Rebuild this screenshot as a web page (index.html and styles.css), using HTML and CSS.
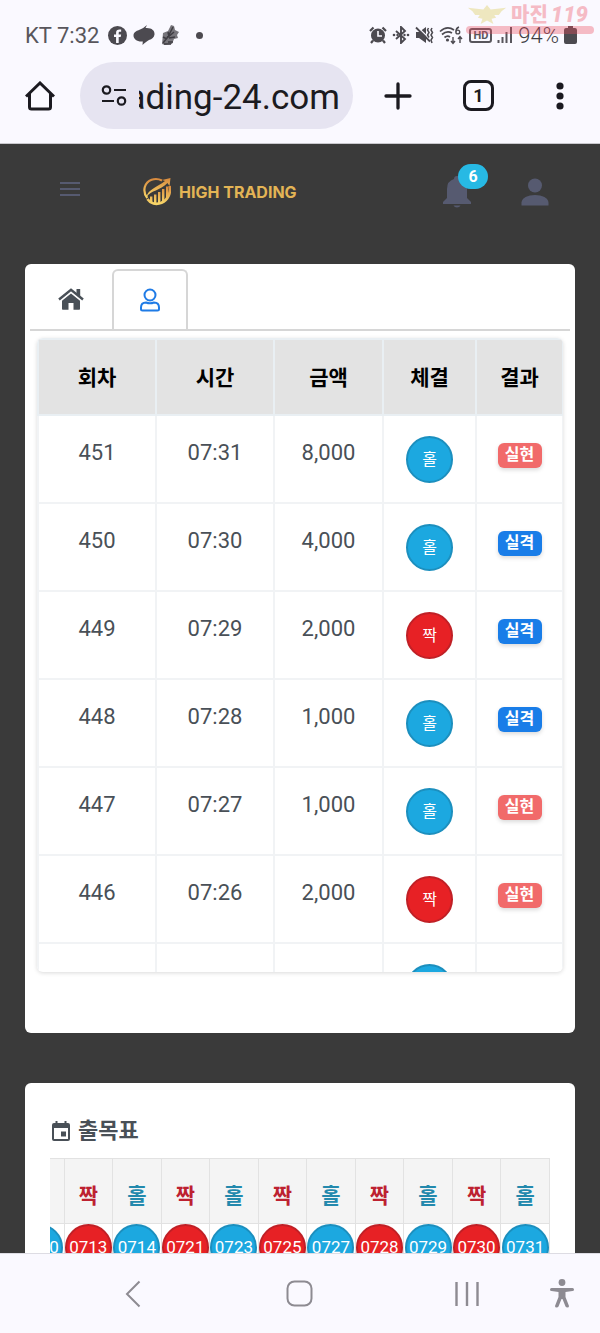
FILE: index.html
```html
<!DOCTYPE html>
<html lang="ko">
<head>
  <meta charset="UTF-8">
  <meta name="viewport" content="width=device-width, initial-scale=1.0">
  <title>HIGH TRADING</title>
  <link rel="stylesheet" href="styles.css">
</head>
<body>
  <div class="phone">
    <div class="status-bar">
      <div class="status-left">
        <span>KT 7:32</span>
        <svg class="facebook" width="19" height="19" viewBox="0 0 24 24"><circle cx="12" cy="12" r="12" fill="#4c4a50"/><path d="M10.2 21.5V14H7.6v-3.2h2.6V8.6c0-3 1.7-4.3 4.2-4.3.9 0 1.600.1 2.200.2v2.800h-1.500c-1.300 0-1.600.7-1.600 1.600v1.900h3.100L16 14h-2.500v7.500z" fill="#faf9ff"/></svg>
        <svg width="22" height="20" viewBox="0 0 22 20"><path d="M14 0 12.500 3C18.500 2.500 22 5.500 21.500 9.500c-.4 3-2.500 4.500-5.500 5.500-2 1-4.500 3-6.500 5L9.800 16.500C4 17 .5 14 .5 10.500.5 7.500 3 6 6 5c3-1 5.500-3 8-5z" fill="#4c4a50"/></svg>
        <svg width="19" height="22" viewBox="0 0 19 22"><path d="m1 20 1-11 5-2 3-6 3 1 1 4 4 2-2 3 1 3-4 1-2 5-7 1z" fill="#77757b"/><path d="m2 19 4-5 3-5 3-6m-6 11 7-6m-5 6 6-1M2 13l4 2M7 8l1 5m-1 5h5M3 20h7" fill="none" stroke="#3f3d43" stroke-width="1.500"/></svg>
        <span class="dot"></span>
      </div>
      <div class="status-right">
        <svg width="18" height="18" viewBox="0 0 18 18"><path d="M1 5 4.500 1.500M17 5l-3.500-3.500M4 14.500 2 17M14 14.500l2 2.500" stroke="#4c4a50" stroke-width="2.200"/><circle cx="9" cy="9.500" r="7" fill="#4c4a50"/><path d="M9 5v5h4" fill="none" stroke="#faf9ff" stroke-width="1.600"/></svg>
        <svg width="18" height="18" viewBox="0 0 18 18"><path d="m4 5 9 8-4 4V1l4 4-9 8" fill="none" stroke="#4c4a50" stroke-width="1.900"/><circle cx="2" cy="9" r="1.300" fill="#4c4a50"/><circle cx="5.500" cy="9" r="1.200" fill="#4c4a50"/><circle cx="12.500" cy="9" r="1.200" fill="#4c4a50"/><circle cx="16" cy="9" r="1.300" fill="#4c4a50"/></svg>
        <svg width="19" height="18" viewBox="0 0 19 18"><path d="M1 6h3l7-5v16l-7-5H1z" fill="#4c4a50"/><path d="M2 .5 17 15" stroke="#faf9ff" stroke-width="1.400"/><path d="m1 1.500 14 14" stroke="#4c4a50" stroke-width="1.800"/><path d="m13.500 2-1 2 1.500 2.500L12.500 9l1.500 2.500M17 2l-1 2 1.500 2.500L16 9l1.500 2.500L16 14l1 3" fill="none" stroke="#4c4a50" stroke-width="1.500"/></svg>
        <svg width="25" height="19" viewBox="0 0 25 19"><path d="M1 5.500Q8-1 15 4M3 8.500Q8 4 13 7M5.500 11.500Q8.500 9 11 11" fill="none" stroke="#4c4a50" stroke-width="1.700"/><circle cx="8.500" cy="14" r="1.600" fill="#4c4a50"/><path d="M20 1q-3 1-3 4.500M14 11v6m-2-2 2 2.500 2-2.500M21 17v-6m-2 2 2-2.500 2 2.500" fill="none" stroke="#4c4a50" stroke-width="1.400"/><circle cx="18.800" cy="6" r="1.900" fill="none" stroke="#4c4a50" stroke-width="1.400"/></svg>
        <span class="hd">HD</span>
        <svg width="16" height="18" viewBox="0 0 16 18"><path d="M1.500 14v3M5.500 11v6M9.500 6v11M14 1v16" stroke="#58565c" stroke-width="2"/></svg>
        <span class="percent">94%</span>
        <svg width="13" height="18" viewBox="0 0 13 18"><path d="M4 0h5v2h2q2 0 2 2v12q0 2-2 2H2q-2 0-2-2V4q0-2 2-2h2z" fill="#4c4a50"/></svg>
      </div>
      <div class="watermark" aria-hidden="true">
        <div class="mark-top">
          <svg width="42" height="20" viewBox="0 0 46 22"><path d="m23 0 4 5 17-2-5 4-3 4h-5l2 3-5 1 2 6-7-4-7 4 2-6-5-1 2-3h-5L7 7 2 3l17 2z" fill="#d8c84a"/></svg>
          <span class="mark-name">마진</span>
          <span class="mark-number">119</span>
        </div>
        <div class="mark-line"></div>
      </div>
    </div>

    <div class="toolbar">
      <button class="icon-button home-button" aria-label="홈">
        <svg width="30" height="30" viewBox="0 0 30 30"><path d="M1 15.500 15 2l14 13.500M4.500 12.500V26q0 2 2 2h17q2 0 2-2V12.500" fill="none" stroke="#1b1a20" stroke-width="3"/></svg>
      </button>
      <div class="address">
        <svg width="26" height="22" viewBox="0 0 26 22"><g fill="none" stroke="#1b1a20" stroke-width="2.200"><circle cx="5.500" cy="5" r="3.700"/><path d="M13 5h12M1 16h12"/><circle cx="20.500" cy="16" r="3.700"/></g></svg>
        <input type="text" value="ading-24.com" aria-label="주소">
      </div>
      <div class="toolbar-actions">
        <button class="icon-button" aria-label="새 탭"><svg width="28" height="28" viewBox="0 0 28 28"><path d="M14 2v24M2 14h24" stroke="#1b1a20" stroke-width="3.300" stroke-linecap="round"/></svg></button>
        <button class="icon-button" aria-label="탭 목록"><span class="tab-count">1</span></button>
        <button class="icon-button" aria-label="메뉴"><svg width="8" height="28" viewBox="0 0 8 28" fill="#1b1a20"><circle cx="4" cy="4" r="3.600"/><circle cx="4" cy="14" r="3.600"/><circle cx="4" cy="24" r="3.600"/></svg></button>
      </div>
    </div>

    <main class="page">
      <header class="site-header">
        <button class="icon-button menu-button" aria-label="메뉴 열기"><svg width="20" height="14" viewBox="0 0 20 14"><path d="M0 1h20M0 7h20M0 13h20" stroke="#565a70" stroke-width="2"/></svg></button>
        <a class="logo" href="#">
          <svg width="28" height="29" viewBox="0 0 28 29">
            <defs><linearGradient id="gold" x1="0" y1="0" x2="0" y2="1"><stop offset="0" stop-color="#d88a3e"/><stop offset="1" stop-color="#f7d568"/></linearGradient></defs>
            <path d="M19 3.500C12 0 4 3 1.800 10c-1 4 0 8 2.500 11" fill="none" stroke="url(#gold)" stroke-width="2.200"/>
            <path d="M26.500 9c1.500 7-1.500 14-8 16.800C13 28 7.500 26.500 4.500 22" fill="none" stroke="url(#gold)" stroke-width="2.800"/>
            <path d="M3.500 20C5 12 14 10.500 22 4l-3-1 8.500-2-1 8-2-3C17 14 8 13 3.500 20z" fill="url(#gold)"/>
            <path d="M7 19.500h2.400V26L7 24zM11 17.500h2.400v9H11zM15 15h2.400v11.500H15zM19 12h2.400v12.500L19 26zM23 9.500h2V20l-2 3z" fill="url(#gold)"/>
          </svg>
          <span>HIGH TRADING</span>
        </a>
        <button class="icon-button bell" aria-label="알림">
          <svg width="28" height="32" viewBox="0 0 28 32"><path d="M14 0q3 0 3 3 7 2 7 10v9l4 4v2H0v-2l4-4v-9Q4 5 11 3q0-3 3-3zM10.500 29.500h7q-1 2-3.500 2t-3.500-2z" fill="#565a70"/></svg>
          <span class="bell-count">6</span>
        </button>
        <button class="icon-button" aria-label="내 정보"><svg width="28" height="28" viewBox="0 0 28 28" fill="#565a70"><circle cx="14" cy="7.500" r="7"/><path d="M.5 27.500v-3C.5 20 7 17 14 17s13.500 3 13.500 7.500v3z"/></svg></button>
      </header>

      <section class="card history">
        <nav class="tabs">
          <a class="tab" href="#" aria-label="홈"><svg width="26" height="22" viewBox="0 0 26 22"><path d="M1 11.500 13 1.800l12 9.700" fill="none" stroke="#495057" stroke-width="2.400"/><path d="M18.500 1h3.700v8l-3.700-3z" fill="#495057"/><path d="m13 5.500 9 7.300V21q0 .8-.8.800H15.500V15h-5v6.800H4.800Q4 21.800 4 21v-8.200z" fill="#495057"/></svg></a>
          <a class="tab active" href="#" aria-label="내 거래"><svg width="20" height="24" viewBox="0 0 20 24" fill="none" stroke="#1f7be6" stroke-width="2"><circle cx="10" cy="7" r="5.500"/><path d="M6 14.500c2 .8 6 .8 8 0 3 0 5 2 5 5V21q0 1.500-1.500 1.500h-15Q1 22.500 1 21v-1.500c0-3 2-5 5-5z"/></svg></a>
        </nav>
        <div class="history-scroll">
          <table class="history-table">
            <colgroup><col class="col-round"><col class="col-time"><col class="col-amount"><col class="col-pick"><col class="col-result"></colgroup>
            <thead>
              <tr><th>회차</th><th>시간</th><th>금액</th><th>체결</th><th>결과</th></tr>
            </thead>
            <tbody>
              <tr><td>451</td><td>07:31</td><td>8,000</td><td><span class="ball odd">홀</span></td><td><span class="badge win">실현</span></td></tr>
              <tr><td>450</td><td>07:30</td><td>4,000</td><td><span class="ball odd">홀</span></td><td><span class="badge lose">실격</span></td></tr>
              <tr><td>449</td><td>07:29</td><td>2,000</td><td><span class="ball even">짝</span></td><td><span class="badge lose">실격</span></td></tr>
              <tr><td>448</td><td>07:28</td><td>1,000</td><td><span class="ball odd">홀</span></td><td><span class="badge lose">실격</span></td></tr>
              <tr><td>447</td><td>07:27</td><td>1,000</td><td><span class="ball odd">홀</span></td><td><span class="badge win">실현</span></td></tr>
              <tr><td>446</td><td>07:26</td><td>2,000</td><td><span class="ball even">짝</span></td><td><span class="badge win">실현</span></td></tr>
              <tr><td></td><td></td><td></td><td><span class="ball odd"></span></td><td></td></tr>
            </tbody>
          </table>
        </div>
      </section>

      <section class="card pattern">
        <h2>
          <svg width="18" height="20" viewBox="0 0 18 20"><path d="M3.500 0h2v2h7V0h2v2H16q2 0 2 2v14q0 2-2 2H2q-2 0-2-2V4q0-2 2-2h1.500zM2 7v11h14V7z" fill="#495057" fill-rule="evenodd"/><path d="M9 10.500h5v5H9z" fill="#495057"/></svg>
          출목표
        </h2>
        <div class="pattern-scroll">
          <table class="pattern-table">
            <thead>
              <tr>
                <th class="blue">홀</th><th class="red">짝</th><th class="blue">홀</th><th class="red">짝</th><th class="blue">홀</th><th class="red">짝</th><th class="blue">홀</th><th class="red">짝</th><th class="blue">홀</th><th class="red">짝</th><th class="blue">홀</th>
              </tr>
            </thead>
            <tbody>
              <tr>
                <td><span class="ball odd">0710</span></td>
                <td><span class="ball even">0713</span></td>
                <td><span class="ball odd">0714</span></td>
                <td><span class="ball even">0721</span></td>
                <td><span class="ball odd">0723</span></td>
                <td><span class="ball even">0725</span></td>
                <td><span class="ball odd">0727</span></td>
                <td><span class="ball even">0728</span></td>
                <td><span class="ball odd">0729</span></td>
                <td><span class="ball even">0730</span></td>
                <td><span class="ball odd">0731</span></td>
              </tr>
            </tbody>
          </table>
        </div>
      </section>
    </main>

    <nav class="system-nav">
      <button class="icon-button nav-back" aria-label="뒤로"><svg width="16" height="28" viewBox="0 0 16 28"><path d="M14.500 1.500 2 14l12.500 12.500" fill="none" stroke="#8d8b92" stroke-width="2"/></svg></button>
      <button class="icon-button" aria-label="홈 화면"><svg width="27" height="27" viewBox="0 0 27 27"><rect x="1.500" y="1.500" width="24" height="24" rx="7" fill="none" stroke="#8d8b92" stroke-width="2"/></svg></button>
      <button class="icon-button" aria-label="최근 앱"><svg width="26" height="26" viewBox="0 0 26 26"><path d="M2.500 1v24M13 1v24M23.500 1v24" stroke="#8d8b92" stroke-width="2.400"/></svg></button>
      <button class="icon-button nav-access" aria-label="접근성"><svg width="24" height="29" viewBox="0 0 24 29" fill="#8d8b92"><circle cx="12" cy="3.500" r="3.400"/><path d="M1.500 9h21q1.500 0 1.500 1.500T22.500 12L15.500 13v5l3.500 9q0 1.500-1.500 1.500T15.500 27.500L12.500 20h-1L8.500 27.500Q8 28.500 6.500 28.500T5 27l3.500-9v-5L1.500 12Q0 12 0 10.500T1.500 9z"/></svg></button>
    </nav>
  </div>
</body>
</html>
```

FILE: styles.css
```css
* {
  box-sizing: border-box;
}
body {
  margin: 0;
  font-family: Roboto, "Noto Sans CJK KR", sans-serif;
  color: #495057;
  background-color: #3a3a3a;
}
svg {
  display: block;
  flex: none;
}
a {
  color: inherit;
  text-decoration: none;
}
.phone {
  display: flex;
  flex-direction: column;
  height: 100vh;
}
.icon-button {
  display: flex;
  align-items: center;
  justify-content: center;
  padding: 0;
  border: none;
  background: none;
  font: inherit;
  cursor: pointer;
}

/* status bar */
.status-bar {
  position: relative;
  display: flex;
  justify-content: space-between;
  flex: none;
  height: 62px;
  padding: 8px 23px 0 25px;
  background-color: #faf9ff;
  color: #58565c;
  font-size: 22px;
}
.status-left, .status-right {
  display: flex;
  align-items: center;
  gap: 6px;
}
.status-right {
  gap: 5px;
}
.facebook {
  margin-left: 3px;
}
.dot {
  width: 7px;
  height: 7px;
  margin-left: 10px;
  border-radius: 50%;
  background-color: #4c4a50;
}
.hd {
  padding: 0 2px;
  border: 2px solid #58565c;
  border-radius: 3px;
  font-size: 11px;
  font-weight: 700;
  line-height: 11px;
}
.percent {
  font-weight: 300;
  color: #3f3d43;
}
.watermark {
  position: absolute;
  top: 4px;
  right: 6px;
  width: 128px;
  opacity: 0.35;
  color: #ee4a5c;
  font-weight: 900;
  line-height: 22px;
}
.mark-top {
  display: flex;
  align-items: center;
  gap: 3px;
}
.mark-name {
  font-size: 20px;
}
.mark-number {
  font-size: 22px;
  font-style: italic;
}
.mark-line {
  height: 8px;
  border-radius: 4px;
  background-color: #ee4a5c;
}

/* browser toolbar */
.toolbar {
  display: flex;
  flex: none;
  height: 82px;
  border-bottom: 1px solid #c9c8cd;
  background-color: #faf9ff;
}
.home-button {
  width: 80px;
  height: 67px;
}
.address {
  display: flex;
  flex: 1;
  align-items: center;
  gap: 12px;
  min-width: 0;
  height: 67px;
  padding: 0 13px 0 21px;
  border-radius: 34px;
  background-color: #e6e4f1;
}
.address input {
  flex: 1;
  min-width: 0;
  height: 52px;
  padding: 4px 0 0;
  border: none;
  outline: none;
  background: none;
  color: #1b1a20;
  font-family: Roboto, sans-serif;
  font-size: 35px;
  direction: rtl;
}
.toolbar-actions {
  display: flex;
  height: 67px;
  margin-left: 4px;
}
.toolbar-actions .icon-button {
  width: 81px;
}
.tab-count {
  width: 31px;
  height: 31px;
  border: 3px solid #1b1a20;
  border-radius: 8px;
  color: #1b1a20;
  font-size: 18px;
  font-weight: 700;
  line-height: 25px;
}

/* web page */
.page {
  flex: 1;
  min-height: 0;
  overflow: hidden;
  padding: 0 25px;
  background-color: #3a3a3a;
}
.site-header {
  display: flex;
  align-items: center;
  height: 95px;
  padding: 0 26px 0 35px;
}
.menu-button {
  padding-bottom: 5px;
}
.logo {
  display: flex;
  align-items: center;
  gap: 8px;
  margin-left: 63px;
  color: #e3b455;
  font-family: Inter, sans-serif;
  font-size: 16px;
  font-weight: 700;
}
.bell {
  position: relative;
  margin-left: auto;
  margin-right: 50px;
}
.bell-count {
  position: absolute;
  top: -12px;
  left: 15px;
  width: 30px;
  border-radius: 13px;
  background-color: #27b9e4;
  color: #fff;
  font-size: 16px;
  font-weight: 700;
  line-height: 25px;
}
.card {
  border-radius: 6px;
  background-color: #fff;
}
.history {
  margin-top: 25px;
  padding: 5px 5px 61px;
}
.tabs {
  display: flex;
  height: 62px;
  border-bottom: 2px solid #d6d6d6;
}
.tab {
  display: flex;
  align-items: center;
  justify-content: center;
  width: 82px;
}
.tab.active {
  width: 76px;
  height: 60px;
  border: 2px solid #d6d6d6;
  border-bottom: none;
  border-radius: 6px 6px 0 0;
}
.history-scroll {
  height: 634px;
  margin: 7px 7px 0;
  overflow: hidden;
  border-radius: 6px;
  box-shadow: 0 1px 4px rgba(0, 0, 0, 0.15);
}
.history-table, .pattern-table {
  table-layout: fixed;
  border-collapse: collapse;
}
.history-table {
  width: 100%;
}
.col-round, .col-time {
  width: 118px;
}
.col-amount {
  width: 109px;
}
.col-pick {
  width: 93px;
}
.col-result {
  width: 87px;
}
.history-table th, .history-table td {
  padding: 0;
  border: 2px solid #f1f3f5;
  text-align: center;
}
.history-table th {
  height: 76px;
  padding-bottom: 2px;
  border-color: #e9eff3;
  background-color: #e3e3e3;
  color: #000;
  font-size: 21px;
  font-weight: 700;
}
.history-table td {
  height: 88px;
  padding-top: 20px;
  vertical-align: top;
  font-size: 22px;
  line-height: 34px;
}
.ball {
  display: block;
  width: 47px;
  height: 47px;
  margin: 0 auto;
  border-radius: 50%;
  color: #fff;
  text-align: center;
  font-size: 16px;
}
.odd {
  border: 2px solid #1c8fbe;
  background-color: #1ca8e0;
}
.even {
  border: 2px solid #c02026;
  background-color: #e72125;
}
.ball.odd, .ball.even {
  line-height: 43px;
}
.badge {
  display: block;
  width: 44px;
  height: 25px;
  margin: 7px auto 0;
  border-radius: 6px;
  box-shadow: 0 2px 4px rgba(0, 0, 0, 0.15);
  color: #fff;
  font-size: 16px;
  font-weight: 700;
  line-height: 23px;
}
.win {
  background-color: #f16a6a;
}
.lose {
  background-color: #197de8;
}
.pattern {
  margin-top: 50px;
  padding: 25px;
}
.pattern h2 {
  display: flex;
  align-items: center;
  gap: 8px;
  margin: 0 0 4px;
  padding-left: 2px;
  font-size: 22px;
  font-weight: 700;
  line-height: 46px;
}
.pattern-scroll {
  display: flex;
  justify-content: flex-end;
  overflow: hidden;
}
.pattern-table {
  flex: none;
  width: 107%;
}
.pattern-table th, .pattern-table td {
  padding: 0;
  border: 1px solid #e2e2e2;
}
.pattern-table th {
  height: 65px;
  padding-top: 6px;
  background-color: #f4f4f4;
  font-size: 21px;
  font-weight: 700;
}
.pattern-table .ball {
  font-size: 17px;
}
.blue {
  color: #2389ad;
}
.red {
  color: #bd2130;
}

/* android navigation */
.system-nav {
  display: grid;
  grid-template-columns: 49px 1fr 1fr 1fr 49px;
  flex: none;
  height: 80px;
  border-top: 1px solid #dddce3;
  background-color: #faf9ff;
}
.nav-back {
  grid-column: 2;
}
.nav-access {
  justify-self: end;
  margin-right: 26px;
}
```
